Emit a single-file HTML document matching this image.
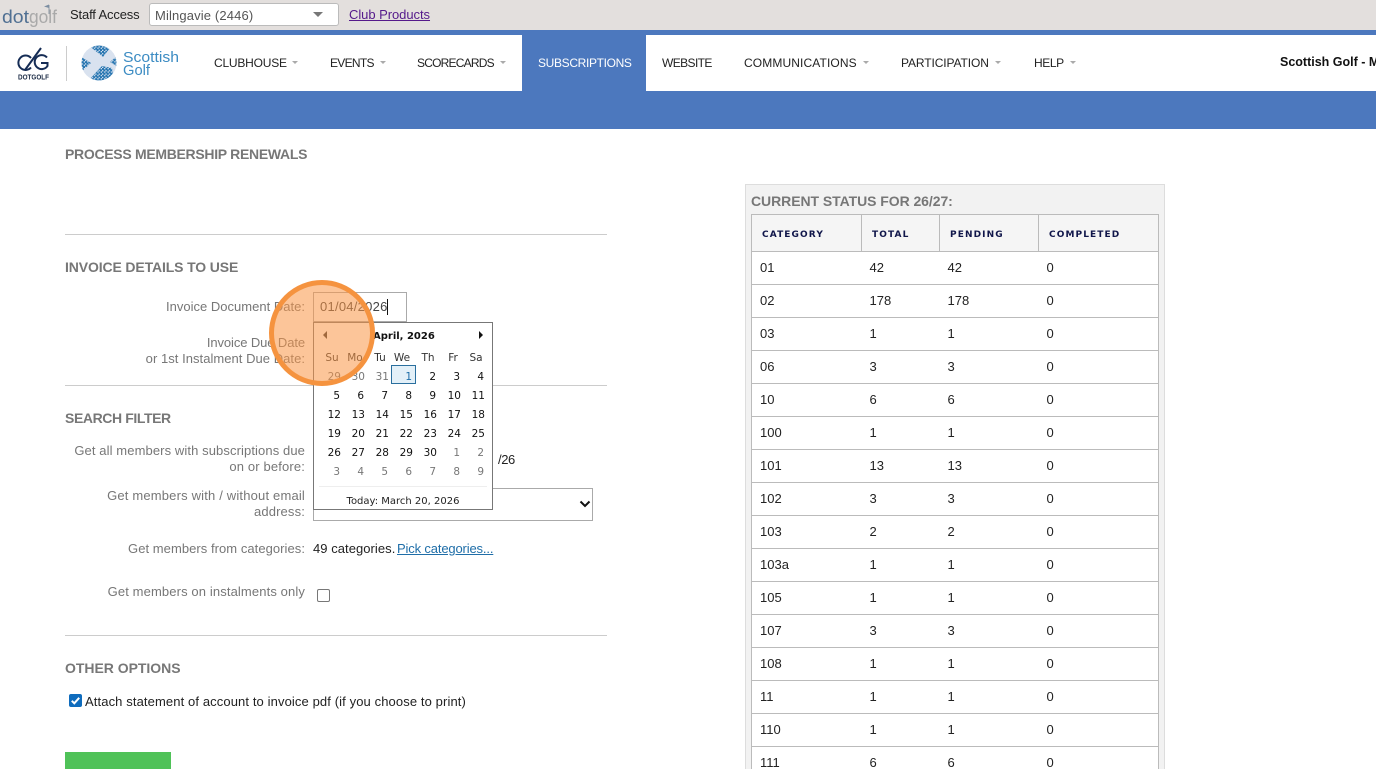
<!DOCTYPE html>
<html lang="en"><head><meta charset="utf-8"><title>Process Membership Renewals</title>
<style>
html,body{margin:0;padding:0;background:#fff;width:1376px;height:769px;overflow:hidden}
#p{width:1376px;height:769px;overflow:hidden;position:relative;font-family:"Liberation Sans",sans-serif;font-size:13px;color:#333}
.a{position:absolute}
.t{position:absolute;white-space:nowrap;line-height:16px}
.n{color:#222;font-size:12px;top:55px}
.c{position:absolute;width:0;height:0;border-left:3px solid transparent;border-right:3px solid transparent;border-top:3px solid #aaa;top:61px}
.h{color:#777;font-weight:bold;font-size:14px;left:65px}
.l{color:#777;text-align:right;right:1071px}
.hr{position:absolute;left:65px;width:542px;height:1px;background:#ccc}
.cal{position:absolute;left:313px;top:322px;width:178px;height:186px;border:1px solid #777;background:#fff}
.d{position:absolute;width:22px;text-align:right;font:10.5px/14px "DejaVu Sans",sans-serif;color:#111;transform:translate(1px,1px)}
.s{transform:translate(0,1px)}
.g{color:#777}
.w{position:absolute;width:30px;text-align:center;font:10.5px/14px "DejaVu Sans",sans-serif;color:#333;top:28px}
table{position:absolute;left:751px;top:214px;width:408px;border-collapse:collapse;table-layout:fixed;background:#fff;font-size:13px;color:#222}
th{height:33px;padding:3px 0 0 10px;background:#f5f5f5;border:1px solid #bbb;text-align:left;font-size:9px;letter-spacing:1.1px;color:#10164a;font-family:"DejaVu Sans",sans-serif;font-weight:bold}
td{height:30px;padding:0 0 2px 8px;border-top:1px solid #bbb;border-bottom:1px solid #bbb}
tr td:first-child{border-left:1px solid #bbb}tr td:last-child{border-right:1px solid #bbb}
</style></head><body><div id="p">
<div class="a" style="left:0;top:0;width:1376px;height:30px;background:#e3dfdd"></div>
<div class="a" style="left:0;top:30px;width:1376px;height:5px;background:#4c78be"></div>
<svg class="a" style="left:0;top:0" width="62" height="30" viewBox="0 0 62 30">
<text x="2" y="23" font-family="Liberation Sans,sans-serif" font-size="18" fill="#4f6f92" textLength="27" lengthAdjust="spacingAndGlyphs">dot</text>
<text x="29" y="23" font-family="Liberation Sans,sans-serif" font-size="18" fill="#a9a9a9" textLength="28" lengthAdjust="spacingAndGlyphs">golf</text>
<path d="M49 5V14" stroke="#8c98a5" stroke-width="1"/><path d="M49 4.500L44 6.500L49 8Z" fill="#7c8ea2"/>
</svg>
<div class="t" style="left:70px;top:7px;color:#222;letter-spacing:-.15px">Staff Access</div>
<div class="a" style="left:149px;top:3px;width:188px;height:21px;background:#fff;border:1px solid #bbb;border-radius:3px"></div>
<div class="t" style="left:155px;top:8px;color:#555;letter-spacing:.14px">Milngavie (2446)</div>
<div class="a" style="left:313px;top:12px;width:0;height:0;border-left:5px solid transparent;border-right:5px solid transparent;border-top:5px solid #777"></div>
<div class="t" style="left:349px;top:7px;color:#551a8b;text-decoration:underline;letter-spacing:-.05px">Club Products</div>

<div class="a" style="left:0;top:35px;width:1376px;height:56px;background:#fff"></div>
<div class="a" style="left:0;top:91px;width:1376px;height:38px;background:#4c78be"></div>
<div class="a" style="left:522px;top:35px;width:124px;height:56px;background:#4c78be"></div>
<svg class="a" style="left:10px;top:40px" width="180" height="45" viewBox="10 40 180 45">
<defs>
<pattern id="dots" width="3.400" height="3.400" patternUnits="userSpaceOnUse"><circle cx="0.850" cy="0.850" r="1.300" fill="#2474b0"/><circle cx="2.550" cy="2.550" r="1.300" fill="#2474b0"/></pattern>
<clipPath id="ball"><circle cx="99" cy="63" r="17.500"/></clipPath>
</defs>
<path d="M31 58A7.200 7.200 0 1 0 31 67.500" fill="none" stroke="#152c55" stroke-width="2"/>
<path d="M25 70L41 48" stroke="#152c55" stroke-width="2"/>
<path d="M47 57.500A7 7 0 1 0 47.500 66V63H41" fill="none" stroke="#152c55" stroke-width="2"/>
<text x="18" y="79.500" font-family="Liberation Sans,sans-serif" font-size="7" font-weight="bold" fill="#1a2a44" textLength="31" lengthAdjust="spacingAndGlyphs">DOTGOLF</text>
<rect x="66" y="46" width="1" height="35" fill="#ccc"/>
<circle cx="99" cy="63" r="17.500" fill="#d9e2ef"/>
<g clip-path="url(#ball)">
<path d="M87 44L113 44L103 57Z" fill="url(#dots)"/>
<path d="M88 81L114 81L112 68L102 66Z" fill="url(#dots)"/>
<path d="M80 56L91 63L80 73Z" fill="url(#dots)"/>
<path d="M118 55L110 62L118 67Z" fill="url(#dots)"/>
</g>
<text x="123" y="62" font-family="Liberation Sans,sans-serif" font-size="15" fill="#3c8cc3" textLength="56" lengthAdjust="spacingAndGlyphs">Scottish</text>
<text x="123" y="75" font-family="Liberation Sans,sans-serif" font-size="15" fill="#3c8cc3" textLength="27" lengthAdjust="spacingAndGlyphs">Golf</text>
</svg>
<div class="t n" style="left:214px;letter-spacing:-.21px">CLUBHOUSE</div><div class="c" style="left:292px"></div>
<div class="t n" style="left:330px;letter-spacing:-.7px">EVENTS</div><div class="c" style="left:380px"></div>
<div class="t n" style="left:417px;letter-spacing:-.78px">SCORECARDS</div><div class="c" style="left:500px"></div>
<div class="t n" style="left:538px;color:#fff;letter-spacing:-.34px">SUBSCRIPTIONS</div>
<div class="t n" style="left:662px;letter-spacing:-.6px">WEBSITE</div>
<div class="t n" style="left:744px;letter-spacing:.12px">COMMUNICATIONS</div><div class="c" style="left:863px"></div>
<div class="t n" style="left:901px;letter-spacing:-.1px">PARTICIPATION</div><div class="c" style="left:995px"></div>
<div class="t n" style="left:1034px;letter-spacing:-.4px">HELP</div><div class="c" style="left:1070px"></div>
<div class="t" style="left:1280px;top:54px;font-size:12.500px;font-weight:bold;color:#111">Scottish Golf - Milngavie</div>

<div class="t h" style="top:146px;letter-spacing:-.3px">PROCESS MEMBERSHIP RENEWALS</div>
<div class="hr" style="top:234px"></div>
<div class="t h" style="top:259px;letter-spacing:-.13px">INVOICE DETAILS TO USE</div>
<div class="t l" style="top:299px;letter-spacing:.01px">Invoice Document Date:</div>
<div class="t l" style="top:335px;letter-spacing:-.1px">Invoice Due Date</div>
<div class="t l" style="top:351px;letter-spacing:.04px">or 1st Instalment Due Date:</div>
<div class="hr" style="top:385px"></div>
<div class="t h" style="top:410px;letter-spacing:-.4px">SEARCH FILTER</div>
<div class="t l" style="top:443px;letter-spacing:.1px">Get all members with subscriptions due</div>
<div class="t l" style="top:459px;letter-spacing:.15px">on or before:</div>
<div class="t l" style="top:488px;letter-spacing:.18px">Get members with / without email</div>
<div class="t l" style="top:504px;letter-spacing:.15px">address:</div>
<div class="t l" style="top:541px;letter-spacing:.05px">Get members from categories:</div>
<div class="t l" style="top:584px;letter-spacing:.12px">Get members on instalments only</div>
<div class="hr" style="top:635px"></div>
<div class="t h" style="top:660px;letter-spacing:-.03px">OTHER OPTIONS</div>

<div class="a" style="left:313px;top:292px;width:92px;height:28px;border:1px solid #aaa;background:#fff"></div>
<div class="t" style="left:320px;top:299px;color:#444;letter-spacing:.25px">01/04/2026</div>
<div class="a" style="left:387px;top:299px;width:1px;height:16px;background:#111"></div>
<div class="t" style="left:498px;top:452px;color:#222;letter-spacing:-.4px">/26</div>
<div class="a" style="left:313px;top:488px;width:278px;height:31px;border:1px solid #aaa;background:#fff"></div>
<svg class="a" style="left:579px;top:500px" width="12" height="8"><path d="M1.500 1.500L6 6L10.500 1.500" fill="none" stroke="#111" stroke-width="2"/></svg>
<div class="t" style="left:313px;top:541px;color:#222;letter-spacing:.05px">49 categories.</div>
<div class="t" style="left:397px;top:541px;color:#1f6ea8;text-decoration:underline;letter-spacing:-.15px">Pick categories...</div>
<div class="a" style="left:317px;top:589px;width:11px;height:11px;border:1px solid #777;border-radius:2px;background:#fff"></div>
<svg class="a" style="left:69px;top:694px" width="13" height="13"><rect width="13" height="13" rx="2" fill="#0f6cbd"/><path d="M2.800 6.800L5.300 9.300L10.200 3.800" fill="none" stroke="#fff" stroke-width="2"/></svg>
<div class="t" style="left:85px;top:694px;color:#222;letter-spacing:.11px">Attach statement of account to invoice pdf (if you choose to print)</div>
<div class="a" style="left:65px;top:752px;width:106px;height:17px;background:#4fc258"></div>

<div class="a" style="left:745px;top:184px;width:418px;height:590px;background:#f2f2f2;border:1px solid #ddd"></div>
<div class="t" style="left:751px;top:193px;font-size:14px;font-weight:bold;color:#777;letter-spacing:-.06px">CURRENT STATUS FOR 26/27:</div>
<table><colgroup><col style="width:110px"><col style="width:78px"><col style="width:99px"><col></colgroup>
<tr><th>CATEGORY</th><th>TOTAL</th><th>PENDING</th><th>COMPLETED</th></tr>
<tr><td>01</td><td>42</td><td>42</td><td>0</td></tr>
<tr><td>02</td><td>178</td><td>178</td><td>0</td></tr>
<tr><td>03</td><td>1</td><td>1</td><td>0</td></tr>
<tr><td>06</td><td>3</td><td>3</td><td>0</td></tr>
<tr><td>10</td><td>6</td><td>6</td><td>0</td></tr>
<tr><td>100</td><td>1</td><td>1</td><td>0</td></tr>
<tr><td>101</td><td>13</td><td>13</td><td>0</td></tr>
<tr><td>102</td><td>3</td><td>3</td><td>0</td></tr>
<tr><td>103</td><td>2</td><td>2</td><td>0</td></tr>
<tr><td>103a</td><td>1</td><td>1</td><td>0</td></tr>
<tr><td>105</td><td>1</td><td>1</td><td>0</td></tr>
<tr><td>107</td><td>3</td><td>3</td><td>0</td></tr>
<tr><td>108</td><td>1</td><td>1</td><td>0</td></tr>
<tr><td>11</td><td>1</td><td>1</td><td>0</td></tr>
<tr><td>110</td><td>1</td><td>1</td><td>0</td></tr>
<tr><td>111</td><td>6</td><td>6</td><td>0</td></tr>
</table>

<div class="cal">
<div class="a" style="left:9px;top:8px;width:0;height:0;border-top:4px solid transparent;border-bottom:4px solid transparent;border-right:4px solid #333"></div>
<div class="a" style="left:165px;top:8px;width:0;height:0;border-top:4px solid transparent;border-bottom:4px solid transparent;border-left:4px solid #111"></div>
<div class="t" style="left:59px;top:6px;font:bold 10px/16px 'DejaVu Sans',sans-serif;color:#111">April, 2026</div>
<div class="w" style="left:3px">Su</div><div class="w" style="left:26px">Mo</div><div class="w" style="left:51px">Tu</div><div class="w" style="left:73px">We</div><div class="w" style="left:99px">Th</div><div class="w" style="left:124px">Fr</div><div class="w" style="left:147px">Sa</div>
<div class="a" style="left:77px;top:42px;width:23px;height:17px;border:1px solid #2a6f9e;background:#e3f0f8"></div>
<div class="d g" style="left:4px;top:46px">29</div><div class="d g" style="left:28px;top:46px">30</div><div class="d g" style="left:52px;top:46px">31</div><div class="d s" style="left:76px;top:46px;color:#1f6ea8">1</div><div class="d s" style="left:100px;top:46px">2</div><div class="d s" style="left:124px;top:46px">3</div><div class="d s" style="left:148px;top:46px">4</div>
<div class="d s" style="left:4px;top:65px">5</div><div class="d s" style="left:28px;top:65px">6</div><div class="d s" style="left:52px;top:65px">7</div><div class="d s" style="left:76px;top:65px">8</div><div class="d s" style="left:100px;top:65px">9</div><div class="d" style="left:124px;top:65px">10</div><div class="d" style="left:148px;top:65px">11</div>
<div class="d" style="left:4px;top:84px">12</div><div class="d" style="left:28px;top:84px">13</div><div class="d" style="left:52px;top:84px">14</div><div class="d" style="left:76px;top:84px">15</div><div class="d" style="left:100px;top:84px">16</div><div class="d" style="left:124px;top:84px">17</div><div class="d" style="left:148px;top:84px">18</div>
<div class="d" style="left:4px;top:103px">19</div><div class="d" style="left:28px;top:103px">20</div><div class="d" style="left:52px;top:103px">21</div><div class="d" style="left:76px;top:103px">22</div><div class="d" style="left:100px;top:103px">23</div><div class="d" style="left:124px;top:103px">24</div><div class="d" style="left:148px;top:103px">25</div>
<div class="d" style="left:4px;top:122px">26</div><div class="d" style="left:28px;top:122px">27</div><div class="d" style="left:52px;top:122px">28</div><div class="d" style="left:76px;top:122px">29</div><div class="d" style="left:100px;top:122px">30</div><div class="d g s" style="left:124px;top:122px">1</div><div class="d g s" style="left:148px;top:122px">2</div>
<div class="d g s" style="left:4px;top:141px">3</div><div class="d g s" style="left:28px;top:141px">4</div><div class="d g s" style="left:52px;top:141px">5</div><div class="d g s" style="left:76px;top:141px">6</div><div class="d g s" style="left:100px;top:141px">7</div><div class="d g s" style="left:124px;top:141px">8</div><div class="d g s" style="left:148px;top:141px">9</div>
<div class="a" style="left:5px;top:163px;width:168px;height:1px;background:#eee"></div>
<div class="t" style="left:0;width:178px;text-align:center;top:171px;font:10px/16px 'DejaVu Sans',sans-serif;color:#222">Today: March 20, 2026</div>
</div>

<div class="a" style="left:269px;top:280px;width:96px;height:96px;border:5.500px solid #f5933f;border-radius:50%;background:rgba(249,150,70,.55)"></div>
</div></body></html>
